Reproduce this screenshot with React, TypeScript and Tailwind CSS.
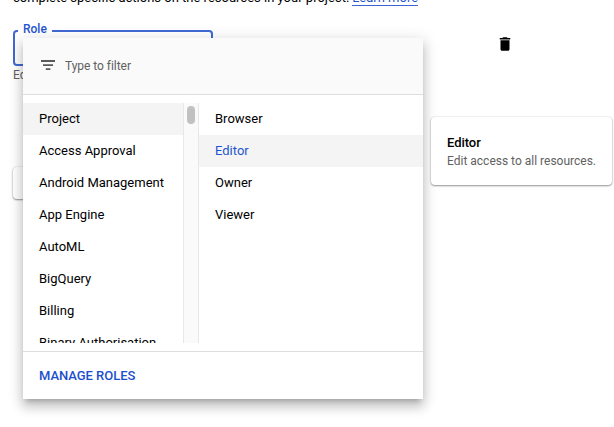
const services = [
  "Project",
  "Access Approval",
  "Android Management",
  "App Engine",
  "AutoML",
  "BigQuery",
  "Billing",
  "Binary Authorisation",
];

const roles = ["Browser", "Editor", "Owner", "Viewer"];

function FilterIcon() {
  return (
    <svg className="h-4 w-4 shrink-0" viewBox="0 0 16 16" fill="#5a5a5a" aria-hidden="true">
      <path d="M1 2.1h14V4H1zM3 6.2h10v1.9H3zM5.8 10.2h4.6v1.8H5.8z" />
    </svg>
  );
}

function TrashIcon() {
  return (
    <svg className="h-[18px] w-[18px]" viewBox="0 0 24 24" fill="#000" aria-hidden="true">
      <path d="M6 19c0 1.1.9 2 2 2h8c1.1 0 2-.9 2-2V7H6v12zM19 4h-3.5l-1-1h-5l-1 1H5v2h14V4z" />
    </svg>
  );
}

function RoleMenu() {
  return (
    <div className="absolute left-[23px] top-[38px] flex h-[361px] w-[400px] flex-col bg-white shadow-[0_5px_5px_-3px_rgba(0,0,0,0.2),0_8px_10px_1px_rgba(0,0,0,0.14),0_3px_14px_2px_rgba(0,0,0,0.12)]">
      <div className="flex h-[57px] shrink-0 items-center gap-[9px] border-b border-[#dedede] bg-[#fafafa] pl-[17px]">
        <FilterIcon />
        <span className="text-[12px] tracking-[-0.04px] text-[#616161]">Type to filter</span>
      </div>
      <div className="mt-2 flex h-[240px] shrink-0 overflow-hidden">
        <ul className="w-40 shrink-0">
          {services.map((name, i) => (
            <li
              key={name}
              className={`flex h-8 items-center whitespace-nowrap pl-4 text-[13px] ${i === 0 ? "bg-[#f4f4f4]" : ""}`}
            >
              {name}
            </li>
          ))}
        </ul>
        <div className="flex w-4 shrink-0 justify-center border-x border-[#e8e8e8] bg-[#fafafa] pt-[3px]">
          <div className="h-[18px] w-2 rounded-full bg-[#c1c1c1]" />
        </div>
        <ul className="flex-1">
          {roles.map((role) => (
            <li
              key={role}
              className={`flex h-8 items-center pl-4 text-[13px] ${role === "Editor" ? "bg-[#f4f4f4] text-[#1f55d0]" : ""}`}
            >
              {role}
            </li>
          ))}
        </ul>
      </div>
      <div className="mt-2 flex flex-1 items-center border-t border-[#dedede] pl-4">
        <button className="text-[13px] font-medium tracking-[-0.04px] text-[#1c4fcd]">MANAGE ROLES</button>
      </div>
    </div>
  );
}

function RoleTooltip() {
  return (
    <div className="absolute left-[431px] top-[117px] h-[68px] w-[181px] rounded bg-white pl-4 pt-[17px] shadow-[0_1px_2px_rgba(0,0,0,0.4),0_0_2px_rgba(0,0,0,0.15)]">
      <div className="text-[13px] font-medium leading-[18px] tracking-[-0.05px]">Editor</div>
      <div className="whitespace-nowrap text-[12px] leading-[18px] text-[#616161]">Edit access to all resources.</div>
    </div>
  );
}

export default function App() {
  return (
    <div className="relative h-[427px] w-[614px] overflow-hidden bg-white font-[Roboto,sans-serif] text-black">
      <div className="-mt-3 flex h-[18px] gap-[3px] whitespace-nowrap pl-[13px] text-[13px] leading-5">
        <span>complete specific actions on the resources in your project.</span>
        <a className="h-[18px] border-b border-[#3d63d3] text-[#1f55d0]">Learn more</a>
      </div>
      <div className="flex items-start pl-[13px] pt-[16px]">
        <div className="w-[200px]">
          <fieldset className="h-[44px] rounded border-2 border-[#4069d3] pl-[3px]">
            <legend className="px-[5px] pb-[4px] text-[12px] font-medium leading-[14px] text-[#1f55d0]">Role</legend>
          </fieldset>
          <div className="pt-px text-[12px] leading-4 text-[#616161]">Editor</div>
        </div>
        <button className="ml-[283px] mt-[13px]">
          <TrashIcon />
        </button>
      </div>
      <div className="ml-[13px] mt-[84px] h-8 w-20 rounded bg-white shadow-[0_1px_2px_rgba(0,0,0,0.4),0_0_2px_rgba(0,0,0,0.15)]" />
      <RoleMenu />
      <RoleTooltip />
    </div>
  );
}
